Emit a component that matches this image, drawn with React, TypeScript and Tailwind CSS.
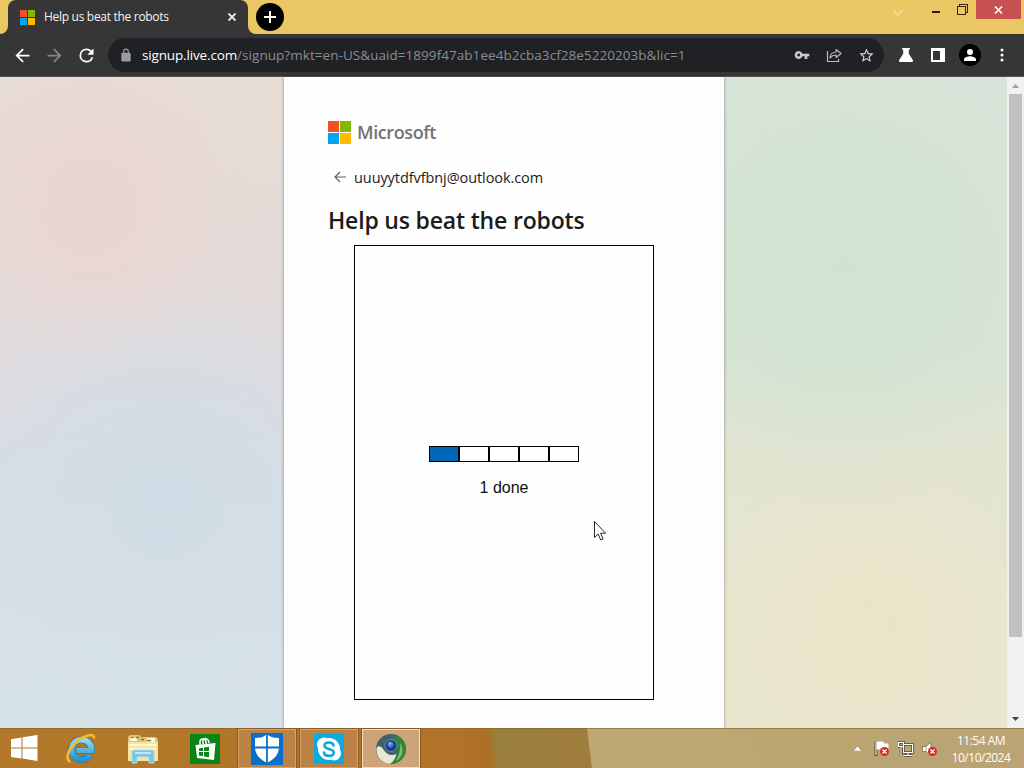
import type { ReactNode } from "react";

const steps = [true, false, false, false, false];

function MicrosoftMark({ className }: { className: string }) {
  return (
    <svg viewBox="0 0 23 23" className={className} shapeRendering="crispEdges">
      <path fill="#f25022" d="M0 0h11v11H0z" />
      <path fill="#7fba00" d="M12 0h11v11H12z" />
      <path fill="#00a4ef" d="M0 12h11v11H0z" />
      <path fill="#ffb900" d="M12 12h11v11H12z" />
    </svg>
  );
}

function ToolButton({ children }: { children: ReactNode }) {
  return <span className="flex size-8 shrink-0 items-center justify-center">{children}</span>;
}

function MaterialIcon({ d, className }: { d: string; className: string }) {
  return (
    <svg viewBox="0 0 24 24" fill="currentColor" className={className}>
      <path d={d} />
    </svg>
  );
}

function TabStrip() {
  return (
    <header className="flex h-[34px] items-start bg-[#ebc764]">
      <div className="relative ml-2 flex h-[34px] w-[240px] items-center rounded-t-lg bg-[#363636] pl-3 pr-2">
        <svg viewBox="0 0 8 8" className="absolute bottom-0 -left-2 size-2">
          <path d="M8 0v8H0a8 8 0 0 0 8-8z" fill="#363636" />
        </svg>
        <svg viewBox="0 0 8 8" className="absolute bottom-0 -right-2 size-2">
          <path d="M0 0v8h8a8 8 0 0 1-8-8z" fill="#363636" />
        </svg>
        <MicrosoftMark className="size-[15px]" />
        <span className="ml-[9px] flex-1 whitespace-nowrap text-[12px] tracking-[-0.3px] text-[#f5f5f5]">
          Help us beat the robots
        </span>
        <svg viewBox="0 0 16 16" className="size-4" stroke="#e8e8e8" strokeWidth="1.8">
          <path d="m4.500 4.500 7 7m0-7-7 7" />
        </svg>
      </div>
      <div className="ml-2 mt-[3px] flex size-7 items-center justify-center rounded-full bg-black">
        <svg viewBox="0 0 12 12" className="size-3" stroke="#fff" strokeWidth="2">
          <path d="M6 0v12M0 6h12" />
        </svg>
      </div>
      <div className="ml-auto mr-[3px] flex items-start">
        <svg viewBox="0 0 12 8" className="mr-7 mt-[9px] h-2 w-3" fill="none" stroke="#f8dfa0" strokeWidth="1.4">
          <path d="m1 1 5 5 5-5" />
        </svg>
        <div className="mr-[17px] mt-[11px] h-[2px] w-2 bg-[#2c1b08]" />
        <svg viewBox="0 0 11 11" className="mr-2 mt-1 size-[11px]" fill="none" stroke="#3a250c" shapeRendering="crispEdges">
          <path d="M2.500 2.500V.5h8v8h-2" />
          <path d="M.5 2.500h8v8h-8z" />
        </svg>
        <div className="flex h-[19px] w-[45px] items-center justify-center bg-[#c75050]">
          <svg viewBox="0 0 9 8" className="h-2 w-[9px]" stroke="#fff" strokeWidth="1.6">
            <path d="m1 .5 7 7m0-7-7 7" />
          </svg>
        </div>
      </div>
    </header>
  );
}

function Toolbar() {
  return (
    <div className="flex h-[43px] items-center border-b border-[#555353] bg-[#363636] px-[6px]">
      <ToolButton>
        <MaterialIcon className="size-[21px] text-white" d="M20 11H7.830l5.590-5.590L12 4l-8 8 8 8 1.410-1.410L7.830 13H20v-2z" />
      </ToolButton>
      <ToolButton>
        <MaterialIcon className="size-[21px] text-[#858585]" d="m12 4-1.410 1.410L16.170 11H4v2h12.170l-5.580 5.590L12 20l8-8z" />
      </ToolButton>
      <ToolButton>
        <MaterialIcon
          className="size-[21px] text-white"
          d="M17.650 6.350A7.950 7.950 0 0 0 12 4a8 8 0 1 0 7.730 10h-2.080A6 6 0 1 1 12 6c1.660 0 3.140.69 4.220 1.780L13 11h7V4l-2.350 2.350z"
        />
      </ToolButton>
      <div className="ml-[6px] flex h-[34px] w-[776px] items-center rounded-full bg-[#202124] pl-[11px] pr-[2px]">
        <MaterialIcon
          className="size-[14px] text-[#9a9ca0]"
          d="M18 8h-1V6A5 5 0 0 0 7 6v2H6a2 2 0 0 0-2 2v11c0 1 1 2 2 2h12c1 0 2-1 2-2V10a2 2 0 0 0-2-2zM9 6a3 3 0 0 1 6 0v2H9z"
        />
        <span className="ml-[9px] flex-1 whitespace-nowrap text-[13.500px] tracking-[0.05px] text-[#8b8d91]">
          <span className="tracking-[-0.15px] text-white">signup.live.com</span>
          /signup?mkt=en-US&amp;uaid=1899f47ab1ee4b2cba3cf28e5220203b&amp;lic=1
        </span>
        <ToolButton>
          <MaterialIcon
            className="size-4 text-[#c9cacc]"
            d="M12.650 10a6 6 0 1 0 0 4H16v4h4v-4h3v-4zM7 14.200a2.200 2.200 0 1 1 0-4.400 2.200 2.200 0 0 1 0 4.400z"
          />
        </ToolButton>
        <ToolButton>
          <svg viewBox="0 0 16 16" className="size-4" fill="none" stroke="#b9babc" strokeWidth="1.2">
            <path d="M1.500 4v10.500h11V12" />
            <path d="M4 11c.2-3.800 2.400-6 6.200-6V2.500L15 6.500l-4.800 4V8C7.500 8 5.500 8.800 4 11z" strokeLinejoin="round" />
          </svg>
        </ToolButton>
        <ToolButton>
          <MaterialIcon
            className="size-[17px] text-[#d5d6d8]"
            d="m22 9.240-7.190-.62L12 2 9.190 8.630 2 9.240l5.460 4.730L5.820 21 12 17.270 18.180 21l-1.630-7.030zM12 15.400l-3.760 2.270 1-4.280-3.320-2.880 4.380-.38L12 6.100l1.710 4.040 4.380.38-3.320 2.880 1 4.280z"
          />
        </ToolButton>
      </div>
      <span className="w-[6px]" />
      <ToolButton>
        <svg viewBox="0 0 14 14" className="size-[14px]" fill="#fff">
          <path d="M3 0h8v1.500H9.800v4.300l4 6.200c.6 1-.1 2-1.200 2H1.400c-1.100 0-1.800-1-1.200-2l4-6.200V1.500H3z" />
        </svg>
      </ToolButton>
      <ToolButton>
        <svg viewBox="0 0 14 14" className="size-[14px]" shapeRendering="crispEdges">
          <path fill="#fff" d="M0 0h14v14H0z" />
          <path fill="#363636" d="M2 3h7v9H2z" />
        </svg>
      </ToolButton>
      <ToolButton>
        <span className="flex size-[22px] items-center justify-center rounded-full bg-black">
          <svg viewBox="0 0 12 12" className="size-3" fill="#fff">
            <circle cx="6" cy="3" r="3" />
            <path d="M0 12v-1.600C0 8.400 4 7.300 6 7.300s6 1.100 6 3.100V12z" />
          </svg>
        </span>
      </ToolButton>
      <ToolButton>
        <svg viewBox="0 0 4 14" className="h-[14px] w-1" fill="#fff">
          <circle cx="2" cy="2" r="1.500" />
          <circle cx="2" cy="7" r="1.500" />
          <circle cx="2" cy="12" r="1.500" />
        </svg>
      </ToolButton>
    </div>
  );
}

function SignupCard() {
  return (
    <section className="h-[651px] w-[440px] bg-[#fefefe] px-11 pt-11 shadow-[0_0_3px_rgba(0,0,0,0.4)]">
      <div className="flex h-[23px] items-center">
        <MicrosoftMark className="size-[23px]" />
        <span className="ml-[6px] text-[18px] font-semibold tracking-[-0.4px] text-[#737373]">Microsoft</span>
      </div>
      <div className="mt-[22px] flex h-6 items-center pl-[6px]">
        <svg viewBox="0 0 12 12" className="size-3 -translate-y-px" fill="none" stroke="#606060" strokeWidth="1.200">
          <path d="M12 6H1m5-5L1 6l5 5" />
        </svg>
        <span className="ml-2 text-[14.500px] tracking-[-0.08px] text-[#1b1b1b]">uuuyytdfvfbnj@outlook.com</span>
      </div>
      <h1 className="mt-4 h-7 whitespace-nowrap text-[23px] font-semibold leading-7 tracking-[-0.18px] text-[#1b1b1b]">
        Help us beat the robots
      </h1>
      <div className="ml-[26px] mt-[11px] flex h-[455px] w-[300px] flex-col items-center border border-black pt-[200px]">
        <div className="flex">
          {steps.map((done, i) => (
            <span key={i} className={done ? "h-4 w-[30px] border border-black bg-[#0067b8]" : "h-4 w-[30px] border border-black bg-white"} />
          ))}
        </div>
        <p className="mt-[14px] font-['Liberation_Sans',sans-serif] text-base text-[#111]">1 done</p>
      </div>
    </section>
  );
}

function Scrollbar() {
  return (
    <div className="flex w-[17px] flex-col items-center bg-[#f1f1f1]">
      <svg viewBox="0 0 17 17" className="size-[17px]">
        <path d="m5 11 3.500-4 3.500 4z" fill="#a0a0a0" />
      </svg>
      <div className="h-[543px] w-[13px] bg-[#c1c1c1]" />
      <svg viewBox="0 0 17 17" className="mt-auto size-[17px]">
        <path d="m5 6 3.500 4L12 6z" fill="#444" />
      </svg>
    </div>
  );
}

function TaskButton({ open, active, children }: { open?: boolean; active?: boolean; children: ReactNode }) {
  let look = "mt-px flex h-[39px] w-[58px] items-center justify-center border ";
  if (active) look += "border-[#f8dfb8] bg-[#cda377] shadow-[0_0_0_1px_#8a5a1c]";
  else if (open) look += "border-[#d6a464] bg-[#ba8244] shadow-[0_0_0_1px_#8a5a1c]";
  else look += "border-transparent";
  return <div className={look}>{children}</div>;
}

function Taskbar() {
  return (
    <footer className="relative flex h-10 overflow-hidden bg-[linear-gradient(83deg,#b37829_0,#b27328_460px,#ad6f25_488px,#99803c_496px,#a07d3c_587px,#bfa873_588px,#baa374_100%)]">
      <div className="absolute inset-x-0 top-0 h-px bg-[#806329]/60" />
      <div className="mr-1 flex w-12 items-center justify-center">
        <svg viewBox="0 0 28 26" className="h-[26px] w-7" fill="#fff">
          <path d="M1 4.200 11.500 2.500v10H1zM12.500 2.300 27.500 0v12.500h-15zM1 13.500h10.500v10L1 22zM12.500 13.500h15V26l-15-2.400z" />
        </svg>
      </div>
      <div className="flex gap-1">
        <TaskButton>
          <svg viewBox="0 0 32 32" className="size-8">
            <defs>
              <linearGradient id="ie" x2="0" y2="1">
                <stop stopColor="#8cdcf5" />
                <stop offset="1" stopColor="#2793cf" />
              </linearGradient>
            </defs>
            <path d="M25 22A10 10 0 1 1 26.500 17.500H11.500" fill="none" stroke="#26739e" strokeWidth="6.800" />
            <path d="M25 22A10 10 0 1 1 26.500 17.500H11.500" fill="none" stroke="url(#ie)" strokeWidth="5.600" />
            <path d="M4.500 28.500C-2 23 9 6 23 2.500c4-1 6-.5 6 2" fill="none" stroke="#f6bd25" strokeWidth="2.600" strokeLinecap="round" />
          </svg>
        </TaskButton>
        <TaskButton>
          <svg viewBox="0 0 32 30" className="h-[30px] w-8">
            <path d="M1 3 3 1h9l2 2h15l2 3v20H1z" fill="#e3c66f" />
            <path d="M3 4h7v3H3zM20 4h8v4h-8z" fill="#fff8d8" />
            <path d="M4 3.500h2m3 0h3m2 2h3m3 1h4" stroke="#6c7951" strokeWidth="1.500" />
            <path d="M1 8h30v19H1z" fill="#f4e6a2" />
            <path d="M2 11h27M2 15h27" stroke="#fff8cb" strokeWidth="2" />
            <path d="M5 29V18c0-1 1-2 2-2h18c1 0 2 1 2 2v11h-5v-6H10v6z" fill="#79c4e7" stroke="#a9dfeb" />
            <path d="M8 19h16" stroke="#c8e7ed" strokeWidth="2" />
          </svg>
        </TaskButton>
        <TaskButton>
          <svg viewBox="0 0 30 30" className="size-[30px]">
            <path fill="#078515" d="M0 0h30v30H0z" />
            <path d="M5.500 11 25.500 9 24 26 7 24z" fill="#fff" />
            <path d="M10 11V8c0-4 6-4 6 0v2m-3 0V7c0-4 6-3 6 2" fill="none" stroke="#fff" strokeWidth="1.500" />
            <path d="m9 14.500 4-.7V17H9zM14 13.600l5-.8V17h-5zM9 18h4v4.300l-4-.7zM14 18h5v5.200l-5-.7z" fill="#078515" />
          </svg>
        </TaskButton>
        <TaskButton open>
          <svg viewBox="0 0 32 32" className="size-8">
            <path fill="#096fca" d="M0 0h32v32H0z" />
            <path d="M16 1c3 3 7 4 12 4v9c0 8-5 12-12 16C9 26 4 22 4 14V5c5 0 9-1 12-4z" fill="#fff" />
            <path d="M16 0v32M3 14.500h26" stroke="#096fca" strokeWidth="1.800" />
          </svg>
        </TaskButton>
        <TaskButton open>
          <svg viewBox="0 0 30 30" className="size-[30px]">
            <path fill="#0ca9df" d="M0 0h30v30H0z" />
            <circle cx="10" cy="10.500" r="7" fill="#fff" />
            <circle cx="20" cy="19.500" r="7" fill="#fff" />
            <circle cx="15" cy="15" r="11" fill="#fff" />
            <path d="M19.500 11.500c-.5-4-9-4-9 .2 0 4.300 9.300 2.400 9.300 7 0 4.300-9.300 4.300-9.800-.2" fill="none" stroke="#0ca9df" strokeWidth="2.600" strokeLinecap="round" />
          </svg>
        </TaskButton>
        <TaskButton active>
          <svg viewBox="0 0 32 32" className="size-8">
            <circle cx="16" cy="16" r="15" fill="#42616b" />
            <path d="M17 5c5-3 9-1 12 4 6 11-3 21-13 22 5-7 9-14 6-20-1-2-3-4-5-6z" fill="#2d8736" />
            <path d="M25 10c5 7 2 15-4 18 3-6 5-11 4-18z" fill="#7dbb6d" />
            <path d="M1.500 15c2-3 5-2 8 3 3 4 7 5 12 3-1 4-3 8-7 10C7 30 1 24 1.500 15z" fill="#e9e6d2" />
            <circle cx="16" cy="12.500" r="6.500" fill="#6f8e9d" />
            <circle cx="16" cy="12.500" r="5.500" fill="#153d8d" />
            <circle cx="15.500" cy="11.500" r="3" fill="#477dcc" />
            <circle cx="15" cy="10.500" r="1.300" fill="#91b8df" />
          </svg>
        </TaskButton>
      </div>
      <div className="ml-auto flex items-center pr-[13px] pt-px">
        <svg viewBox="0 0 10 6" className="mr-3 h-[5px] w-[9px]">
          <path d="m5 0 5 6H0z" fill="#fff" stroke="#8d7753" strokeWidth=".5" />
        </svg>
        <svg viewBox="0 0 16 17" className="mr-2 h-[17px] w-4">
          <path d="M2 1v15" stroke="#574a3b" strokeWidth="3" />
          <path d="M2 1v14M3 2h6l1 2h4v7H9L8 9H3z" stroke="#fff" fill="#fff" />
          <circle cx="10.500" cy="11.500" r="4.500" fill="#d22c24" />
          <path d="m8.500 9.500 4 4m0-4-4 4" stroke="#fff" strokeWidth="1.400" />
        </svg>
        <svg viewBox="0 0 16 16" className="mr-2 size-4" fill="none">
          <path d="M5.500 3.500h9v8h-9zM10 11.500V15m-4-.5h8M.5 1.500h5v4h-5zM3 5.500V15" stroke="#514637" strokeWidth="2.600" />
          <path d="M5.500 3.500h9v8h-9zM10 11.500V15m-4-.5h8M.5 1.500h5v4h-5zM3 5.500V15" stroke="#fff" strokeWidth="1.100" />
        </svg>
        <svg viewBox="0 0 16 16" className="mr-[13px] size-4">
          <path d="M.5 5.500H4L9 1v14l-5-4.500H.5z" fill="#fff" stroke="#8b7960" />
          <path d="M4 5.500v5" stroke="#b0a286" />
          <circle cx="10.500" cy="10.500" r="4.500" fill="#d22c24" />
          <path d="m8.500 8.500 4 4m0-4-4 4" stroke="#fff" strokeWidth="1.400" />
        </svg>
        <div className="flex h-[34px] w-[60px] flex-col items-center whitespace-nowrap text-[12px] leading-[17px] tracking-[-0.5px] text-white">
          <span>11:54 AM</span>
          <span>10/10/2024</span>
        </div>
      </div>
    </footer>
  );
}

export default function App() {
  return (
    <div className="relative flex h-[768px] w-[1024px] flex-col overflow-hidden font-['Open_Sans','Noto_Sans',sans-serif]">
      <TabStrip />
      <Toolbar />
      <main className="flex h-[651px] bg-[radial-gradient(circle_at_90px_125px,#ebd4cf_0,#ebd4cf00_160px),radial-gradient(circle_at_165px_420px,#d0dde6_0,#d0dde600_220px),radial-gradient(circle_at_845px_190px,#d0e3d0_0,#d0e3d000_240px),radial-gradient(circle_at_870px_550px,#ece3c8_0,#ece3c800_180px),linear-gradient(180deg,#d7e4da_0,#d9e4d5_42%,#e2e5d2_56%,#e8e7cf_100%),linear-gradient(180deg,#e7ddd4_0,#e2dada_35%,#d9dce3_58%,#d6e3ea_100%)] bg-[position:0_0,0_0,0_0,0_0,724px_0,0_0] bg-no-repeat">
        <div className="flex flex-1 justify-center pl-[1px]">
          <SignupCard />
        </div>
        <Scrollbar />
      </main>
      <Taskbar />
      <svg viewBox="0 0 12 20" className="absolute left-[594px] top-[521px] h-5 w-3">
        <path d="M.5.5v16l3.700-3.500 2.500 6 2.400-1-2.500-5.800h5z" fill="#fff" stroke="#111" strokeWidth=".9" />
      </svg>
    </div>
  );
}
